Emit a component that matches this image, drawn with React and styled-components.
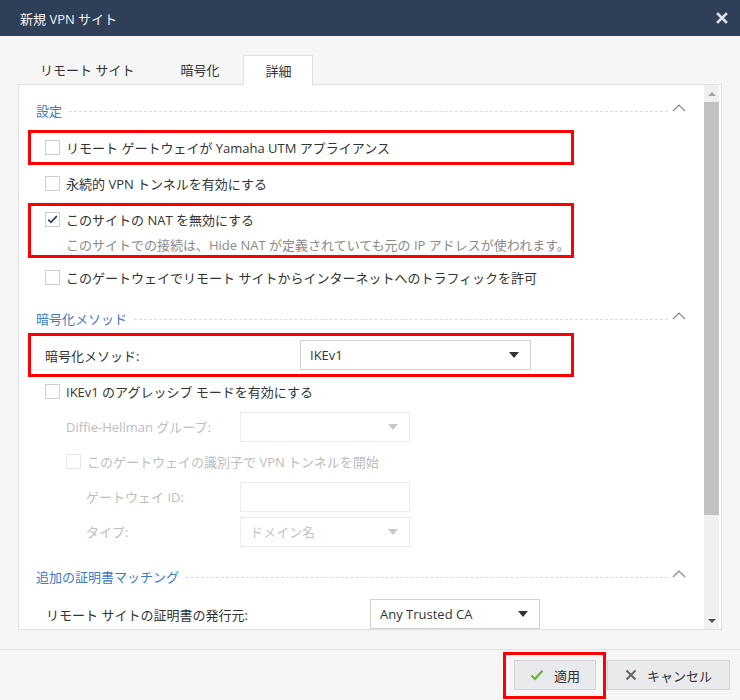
import React from "react"
import styled, { createGlobalStyle } from "styled-components"

const GlobalStyle = createGlobalStyle`
  html, body {
    margin: 0;
    padding: 0;
    background: #f6f6f6;
  }
  body {
    font-family: "Open Sans", "Noto Sans CJK JP", sans-serif;
    font-size: 13px;
    color: #333;
  }
  * { box-sizing: border-box; }
`

const App = () => (
  <>
    <GlobalStyle />
    <Dialog>
      <Header>
        <Title>新規 VPN サイト</Title>
        <Close aria-label="close">
          <svg width="12" height="12" viewBox="0 0 12 12">
            <path d="M2 2 L10 10 M10 2 L2 10" stroke="#dfe4ec" strokeWidth="2.6" strokeLinecap="square" />
          </svg>
        </Close>
      </Header>

      <Body>
        <Tabs>
          <Tab>リモート サイト</Tab>
          <Tab>暗号化</Tab>
          <Tab active>詳細</Tab>
        </Tabs>

        <Panel>
          <Content>
            <Section title="設定" first />

            <Highlight $mt={8}>
              <CheckRow $h={29} $pl={14}>
                <Checkbox />
                <span>リモート ゲートウェイが Yamaha UTM アプライアンス</span>
              </CheckRow>
            </Highlight>

            <CheckRow $h={34} $pl={26} $mt={1}>
              <Checkbox />
              <span>永続的 VPN トンネルを有効にする</span>
            </CheckRow>

            <Highlight $mt={3}>
              <Stacked>
                <CheckRow $h={28} $pl={0}>
                  <Checkbox checked />
                  <span>このサイトの NAT を無効にする</span>
                </CheckRow>
                <Hint>このサイトでの接続は、Hide NAT が定義されていても元の IP アドレスが使われます。</Hint>
              </Stacked>
            </Highlight>

            <CheckRow $h={38} $pl={26}>
              <Checkbox />
              <span>このゲートウェイでリモート サイトからインターネットへのトラフィックを許可</span>
            </CheckRow>

            <Section title="暗号化メソッド" $mt={10} />

            <Highlight $mt={3}>
              <FieldRow $h={38} $pl={14} $labelWidth={255}>
                <FieldLabel>暗号化メソッド:</FieldLabel>
                <Select width={231}>IKEv1</Select>
              </FieldRow>
            </Highlight>

            <CheckRow $h={28} $pl={26}>
              <Checkbox />
              <span>IKEv1 のアグレッシブ モードを有効にする</span>
            </CheckRow>

            <FieldRow $h={35} $pl={47} $labelWidth={174} $mt={4} disabled>
              <FieldLabel>Diffie-Hellman グループ:</FieldLabel>
              <Select width={170} disabled />
            </FieldRow>

            <CheckRow $h={35} $pl={47} disabled>
              <Checkbox disabled />
              <span>このゲートウェイの識別子で VPN トンネルを開始</span>
            </CheckRow>

            <FieldRow $h={35} $pl={67} $labelWidth={154} disabled>
              <FieldLabel>ゲートウェイ ID:</FieldLabel>
              <TextInput disabled />
            </FieldRow>

            <FieldRow $h={35} $pl={67} $labelWidth={154} disabled>
              <FieldLabel>タイプ:</FieldLabel>
              <Select width={170} disabled>ドメイン名</Select>
            </FieldRow>

            <Section title="追加の証明書マッチング" $mt={15} />

            <FieldRow $h={36} $pl={27} $labelWidth={324} $mt={8}>
              <FieldLabel>リモート サイトの証明書の発行元:</FieldLabel>
              <Select width={170}>Any Trusted CA</Select>
            </FieldRow>
          </Content>

          <Scrollbar>
            <ScrollArrow up />
            <ScrollTrack>
              <Thumb />
            </ScrollTrack>
            <ScrollArrow />
          </Scrollbar>
        </Panel>
      </Body>

      <Footer>
        <ButtonFrame>
          <Button>
            <svg width="14" height="12" viewBox="0 0 14 12">
              <path d="M1.5 6.5 L5 10 L12.5 1.8" fill="none" stroke="#6ab03c" strokeWidth="2.2" />
            </svg>
            適用
          </Button>
        </ButtonFrame>
        <Button wide>
          <svg width="12" height="12" viewBox="0 0 12 12">
            <path d="M1.5 1.5 L10.5 10.5 M10.5 1.5 L1.5 10.5" stroke="#666" strokeWidth="2" />
          </svg>
          キャンセル
        </Button>
      </Footer>
    </Dialog>
  </>
)

export default App

const Section = ({ title, first, $mt }) => (
  <SectionHeader $first={first} $mt={$mt}>
    <SectionTitle>{title}</SectionTitle>
    <Dashes />
    <Chevron>
      <svg width="14" height="8" viewBox="0 0 14 8">
        <path d="M1 7 L7 1 L13 7" fill="none" stroke="#888" strokeWidth="1.2" />
      </svg>
    </Chevron>
  </SectionHeader>
)

const Checkbox = ({ checked, disabled }) => (
  <Box $disabled={disabled}>
    {checked && (
      <svg width="11" height="9" viewBox="0 0 11 9">
        <path d="M1.2 4.6 L4 7.4 L9.8 1.2" fill="none" stroke="#2e3f58" strokeWidth="1.7" />
      </svg>
    )}
  </Box>
)

const Select = ({ width, disabled, children }) => (
  <SelectBox $width={width} $disabled={disabled}>
    <span>{children}</span>
    <Caret $disabled={disabled} />
  </SelectBox>
)

const Dialog = styled.div`
  width: 740px;
  height: 700px;
  display: flex;
  flex-direction: column;
  background: #f6f6f6;
  overflow: hidden;
`

const Header = styled.div`
  height: 36px;
  flex: 0 0 36px;
  background: #2f3f57;
  display: flex;
  align-items: center;
  justify-content: space-between;
  padding: 0 12px 0 20px;
`

const Title = styled.div`
  color: #f2f4f7;
  font-size: 13px;
`

const Close = styled.div`
  display: flex;
  align-items: center;
  width: 12px;
  height: 12px;
`

const Body = styled.div`
  padding: 18px 18px 0;
  flex: 0 0 auto;
`

const Tabs = styled.div`
  display: flex;
  height: 30px;
  gap: 2px;
`

const Tab = styled.div`
  padding: 0 21px;
  display: flex;
  align-items: center;
  font-size: 13px;
  color: #333;
  border: 1px solid ${p => (p.active ? "#dde0e5" : "transparent")};
  border-bottom: none;
  background: ${p => (p.active ? "#fff" : "transparent")};
  position: relative;
  top: ${p => (p.active ? "1px" : "0")};
  z-index: 1;
`

const Panel = styled.div`
  height: 546px;
  background: #fff;
  border: 1px solid #dde0e5;
  display: flex;
`

const Content = styled.div`
  flex: 1;
  overflow: hidden;
  padding-top: 13px;
`

const SectionHeader = styled.div`
  height: 24px;
  display: flex;
  align-items: center;
  padding: 0 18px 0 17px;
  margin-top: ${p => (p.$first ? 0 : p.$mt || 0)}px;
`

const SectionTitle = styled.div`
  color: #3d7ac6;
  font-size: 13px;
  white-space: nowrap;
`

const Dashes = styled.div`
  flex: 1;
  border-top: 1px dashed #dcdcdc;
  margin: 2px 4px 0 7px;
`

const Chevron = styled.div`
  width: 14px;
  display: flex;
  margin-top: -4px;
`

const Highlight = styled.div`
  width: 546px;
  margin: ${p => p.$mt || 0}px 0 0 9px;
  border: 3px solid #ff0000;
`

const Stacked = styled.div`
  padding: 0 0 0 14px;
  height: 49px;
  display: flex;
  flex-direction: column;
`

const CheckRow = styled.div`
  height: ${p => p.$h}px;
  margin-top: ${p => p.$mt || 0}px;
  padding-left: ${p => p.$pl}px;
  display: flex;
  align-items: center;
  gap: 6px;
  white-space: nowrap;
  color: ${p => (p.disabled ? "#bdbdbd" : "#333")};
`

const Box = styled.div`
  width: 15px;
  height: 15px;
  flex: 0 0 15px;
  border: 1px solid ${p => (p.$disabled ? "#e6e6e6" : "#cfcfcf")};
  background: #fff;
  display: flex;
  align-items: center;
  justify-content: center;
`

const Hint = styled.div`
  padding-left: 21px;
  color: #8a8a8a;
  white-space: nowrap;
  line-height: 20px;
  margin-top: 2px;
`

const FieldRow = styled.div`
  height: ${p => p.$h}px;
  margin-top: ${p => p.$mt || 0}px;
  padding-left: ${p => p.$pl}px;
  display: flex;
  align-items: center;
  color: ${p => (p.disabled ? "#bdbdbd" : "#333")};

  & > div:first-child {
    width: ${p => p.$labelWidth}px;
    flex: 0 0 ${p => p.$labelWidth}px;
  }
`

const FieldLabel = styled.div`
  white-space: nowrap;
`

const SelectBox = styled.div`
  width: ${p => p.$width}px;
  height: 30px;
  border: 1px solid ${p => (p.$disabled ? "#ececec" : "#d2d2d2")};
  background: #fff;
  display: flex;
  align-items: center;
  justify-content: space-between;
  padding: 0 11px 0 9px;
  color: ${p => (p.$disabled ? "#c4c4c4" : "#333")};
`

const Caret = styled.div`
  width: 0;
  height: 0;
  border-left: 5px solid transparent;
  border-right: 5px solid transparent;
  border-top: 6px solid ${p => (p.$disabled ? "#c8c8c8" : "#333")};
`

const TextInput = styled.div`
  width: 170px;
  height: 30px;
  border: 1px solid #ececec;
  background: #fff;
`

const Scrollbar = styled.div`
  width: 15px;
  flex: 0 0 15px;
  margin-right: 2px;
  background: #f0f0f0;
  display: flex;
  flex-direction: column;
`

const ScrollArrow = styled.div`
  height: 17px;
  display: flex;
  align-items: center;
  justify-content: center;

  &::after {
    content: "";
    border-left: 4px solid transparent;
    border-right: 4px solid transparent;
    ${p =>
      p.up
        ? "border-bottom: 4px solid #a3a3a3;"
        : "border-top: 4px solid #505050;"}
  }
`

const ScrollTrack = styled.div`
  flex: 1;
`

const Thumb = styled.div`
  height: 413px;
  background: #c1c1c1;
`

const Footer = styled.div`
  margin-top: 19px;
  flex: 1;
  border-top: 1px solid #dfe1e6;
  display: flex;
  justify-content: flex-end;
  align-items: flex-start;
  padding: 2px 10px 0 0;
`

const ButtonFrame = styled.div`
  border: 3px solid #ff0000;
  padding: 5px 7px 6px 8px;
  margin-right: 1px;
`

const Button = styled.div`
  height: 30px;
  width: ${p => (p.wide ? 123 : 82)}px;
  margin-top: ${p => (p.wide ? 8 : 0)}px;
  background: #e9eaeb;
  border: 1px solid #d3d3d3;
  display: flex;
  align-items: center;
  justify-content: center;
  gap: 10px;
  font-size: 13px;
  color: #333;
`
